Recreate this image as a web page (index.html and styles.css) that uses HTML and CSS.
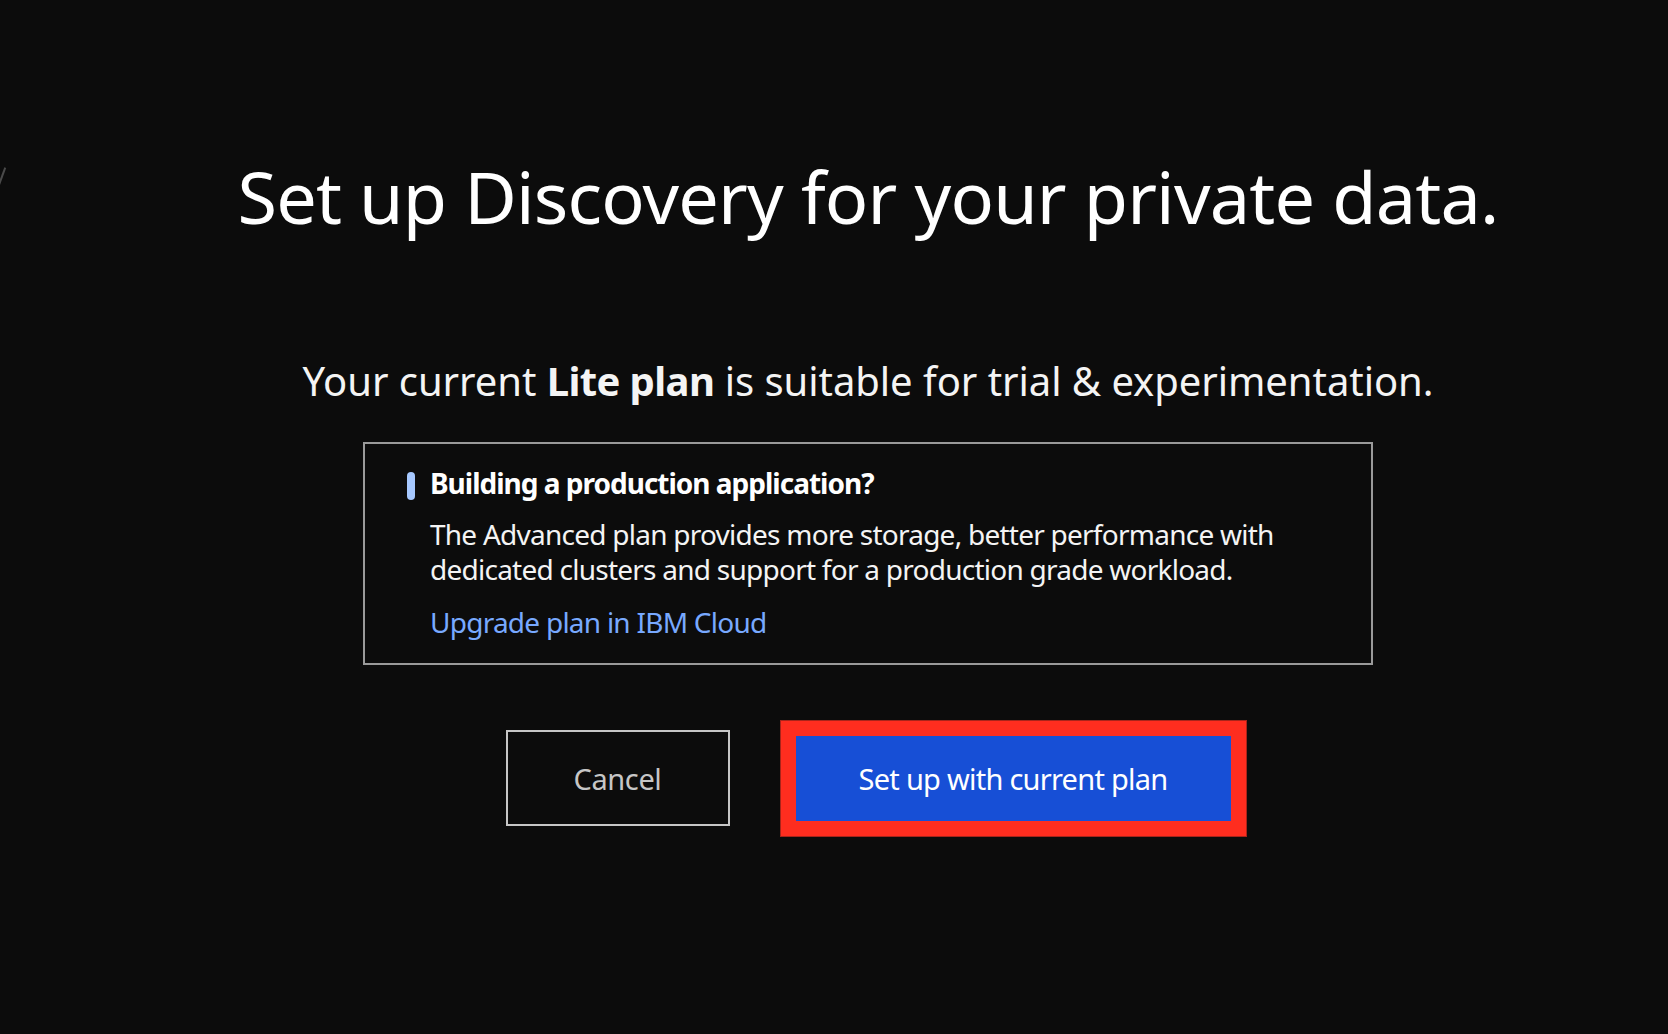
FILE: index.html
```html
<!DOCTYPE html>
<html lang="en">
<head>
<meta charset="utf-8">
<title>Set up Discovery</title>
<link rel="stylesheet" href="styles.css">
</head>
<body>
<span class="edge-mark"></span>
<main class="page">
  <h1 class="title">Set up Discovery for your private data.</h1>
  <p class="subtitle">Your current <strong>Lite plan</strong> is suitable for trial &amp; experimentation.</p>
  <section class="notice">
    <div class="notice-head">
      <span class="notice-bar"></span>
      <h2 class="notice-title">Building a production application?</h2>
    </div>
    <p class="notice-body">The Advanced plan provides more storage, better performance with dedicated clusters and support for a production grade workload.</p>
    <a class="notice-link" href="#">Upgrade plan in IBM Cloud</a>
  </section>
  <div class="actions">
    <button class="btn btn-secondary" type="button">Cancel</button>
    <button class="btn btn-primary" type="button">Set up with current plan</button>
  </div>
</main>
</body>
</html>
```

FILE: styles.css
```css
* { box-sizing: border-box; }

html, body {
  margin: 0;
  padding: 0;
  background: #0c0c0c;
  height: 100%;
}

body {
  font-family: "Noto Sans", "Open Sans", sans-serif;
  color: #f4f4f4;
  overflow: hidden;
}

.edge-mark {
  position: absolute;
  left: 1px;
  top: 167px;
  width: 2px;
  height: 19px;
  background: #4a4a4a;
  transform: rotate(20deg);
}

.page {
  display: flex;
  flex-direction: column;
  align-items: center;
  padding-left: 68px;
}

.title {
  margin: 153px 0 0;
  font-size: 72px;
  line-height: 86px;
  font-weight: 400;
  letter-spacing: -0.8px;
  color: #ffffff;
  white-space: nowrap;
}

.subtitle {
  margin: 118px 0 0;
  font-size: 40px;
  line-height: 48px;
  font-weight: 400;
  letter-spacing: -0.05px;
  color: #f4f4f4;
  white-space: nowrap;
}

.subtitle strong { font-weight: 700; letter-spacing: -0.6px; }

.notice {
  margin-top: 37px;
  width: 1010px;
  border: 2px solid #9a9a9a;
  padding: 22px 40px 23px 42px;
  display: flex;
  flex-direction: column;
}

.notice-head {
  display: flex;
  align-items: center;
  gap: 15px;
}

.notice-bar {
  width: 8px;
  height: 28px;
  border-radius: 4px;
  background: #a6c8ff;
  margin-top: 5px;
}

.notice-title {
  margin: 0;
  font-size: 28px;
  line-height: 35px;
  font-weight: 700;
  letter-spacing: -1px;
  color: #ffffff;
}

.notice-body {
  margin: 16px 0 0 23px;
  max-width: 860px;
  font-size: 28px;
  line-height: 35px;
  letter-spacing: -0.75px;
  color: #f4f4f4;
}

.notice-link {
  margin: 18px 0 0 23px;
  font-size: 28px;
  line-height: 35px;
  letter-spacing: -0.75px;
  color: #78a9ff;
  text-decoration: none;
  align-self: flex-start;
}

.actions {
  margin-top: 65px;
  display: flex;
  align-items: center;
  gap: 66px;
}

.btn {
  font-family: inherit;
  font-size: 29px;
  line-height: 35px;
  border-radius: 0;
  cursor: pointer;
}

.btn-secondary {
  width: 224px;
  height: 96px;
  background: transparent;
  border: 2px solid #c6c6c6;
  color: #c6c6c6;
  letter-spacing: -0.4px;
}

.btn-primary {
  width: 435px;
  height: 85px;
  background: #174fd6;
  border: none;
  color: #ffffff;
  letter-spacing: -0.75px;
  outline: 15px solid #fe2d1f;
  box-shadow: 0 0 0 16px #a8241a;
}
```
